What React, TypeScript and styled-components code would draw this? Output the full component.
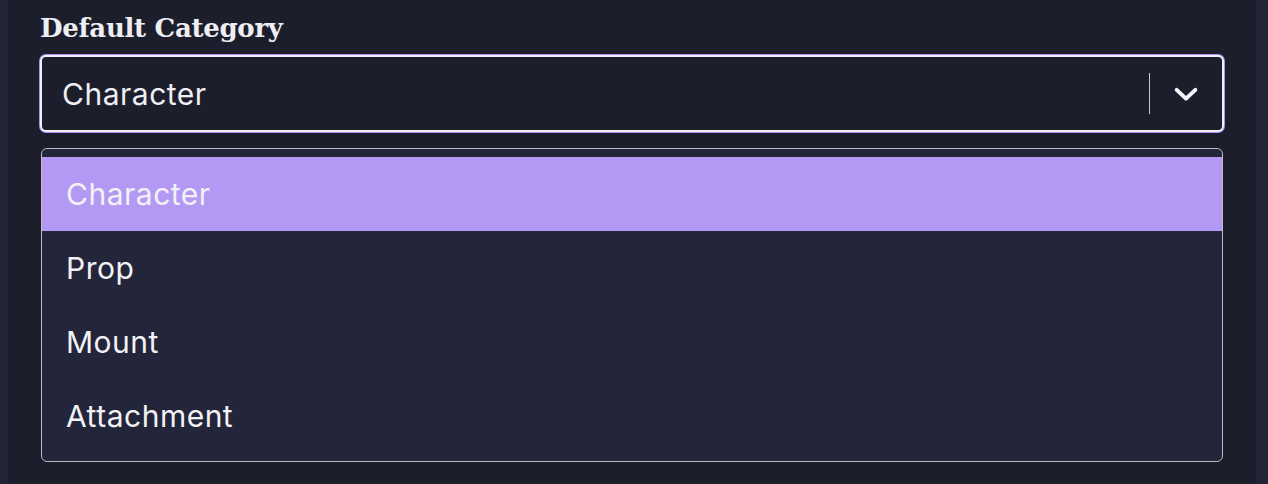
import React from 'react';
import styled, { createGlobalStyle } from 'styled-components';

const GlobalStyle = createGlobalStyle`
  html, body {
    margin: 0;
    padding: 0;
    background: #1d1e2c;
  }
`;

const Page = styled.div`
  display: grid;
  grid-template-columns: 8px 1fr 12px;
  width: 1268px;
  height: 484px;
  background: #1d1e2c;
  overflow: hidden;
`;

const Edge = styled.div`
  background: #232436;
`;

const Panel = styled.div`
  padding: 10px 32px 0 32px;
  display: flex;
  flex-direction: column;
`;

const Label = styled.label`
  font-family: 'DejaVu Serif', serif;
  font-weight: bold;
  font-size: 26px;
  letter-spacing: -0.3px;
  color: #eeeef3;
  line-height: 36px;
  margin-bottom: 9px;
`;

const Control = styled.div`
  height: 77px;
  box-sizing: border-box;
  border: 2px solid #f2f0fb;
  border-radius: 6px;
  box-shadow: 0 0 0 1px #a88ff0;
  background: #1d1e2c;
  display: flex;
  align-items: center;
  padding-left: 20px;
`;

const Value = styled.div`
  flex: 1;
  font-family: Inter, 'Noto Sans', sans-serif;
  font-size: 30px;
  letter-spacing: 0.5px;
  color: #eeeef4;
`;

const Indicators = styled.div`
  display: flex;
  align-items: center;
  height: 100%;
`;

const Separator = styled.span`
  width: 1px;
  height: 41px;
  background: #c8c8cc;
`;

const Chevron = styled.div`
  width: 72px;
  display: flex;
  align-items: center;
  justify-content: center;
  color: #f4f4f8;
`;

const Menu = styled.div`
  margin-top: 16px;
  margin-left: 1px;
  margin-right: 1px;
  border: 1.5px solid #bcbcc0;
  border-radius: 6px;
  background: #23253a;
  padding: 8px 0;
`;

const Option = styled.div<{ $selected?: boolean }>`
  height: 74px;
  display: flex;
  align-items: center;
  padding-left: 24px;
  font-family: Inter, 'Noto Sans', sans-serif;
  font-size: 30px;
  letter-spacing: 0.5px;
  color: #f2f2f6;
  background: ${(p) => (p.$selected ? '#b399f4' : 'transparent')};
`;

const options = ['Character', 'Prop', 'Mount', 'Attachment'];

export default function App() {
  return (
    <>
      <GlobalStyle />
      <Page>
        <Edge />
        <Panel>
          <Label>Default Category</Label>
          <Control>
            <Value>Character</Value>
            <Indicators>
              <Separator />
              <Chevron>
                <svg width="28" height="28" viewBox="0 0 24 24" fill="none" stroke="currentColor" strokeWidth="3.4" strokeLinecap="round" strokeLinejoin="round">
                  <polyline points="4 8.5 12 16 20 8.5" />
                </svg>
              </Chevron>
            </Indicators>
          </Control>
          <Menu>
            {options.map((o, i) => (
              <Option key={o} $selected={i === 0}>
                {o}
              </Option>
            ))}
          </Menu>
        </Panel>
        <Edge />
      </Page>
    </>
  );
}
